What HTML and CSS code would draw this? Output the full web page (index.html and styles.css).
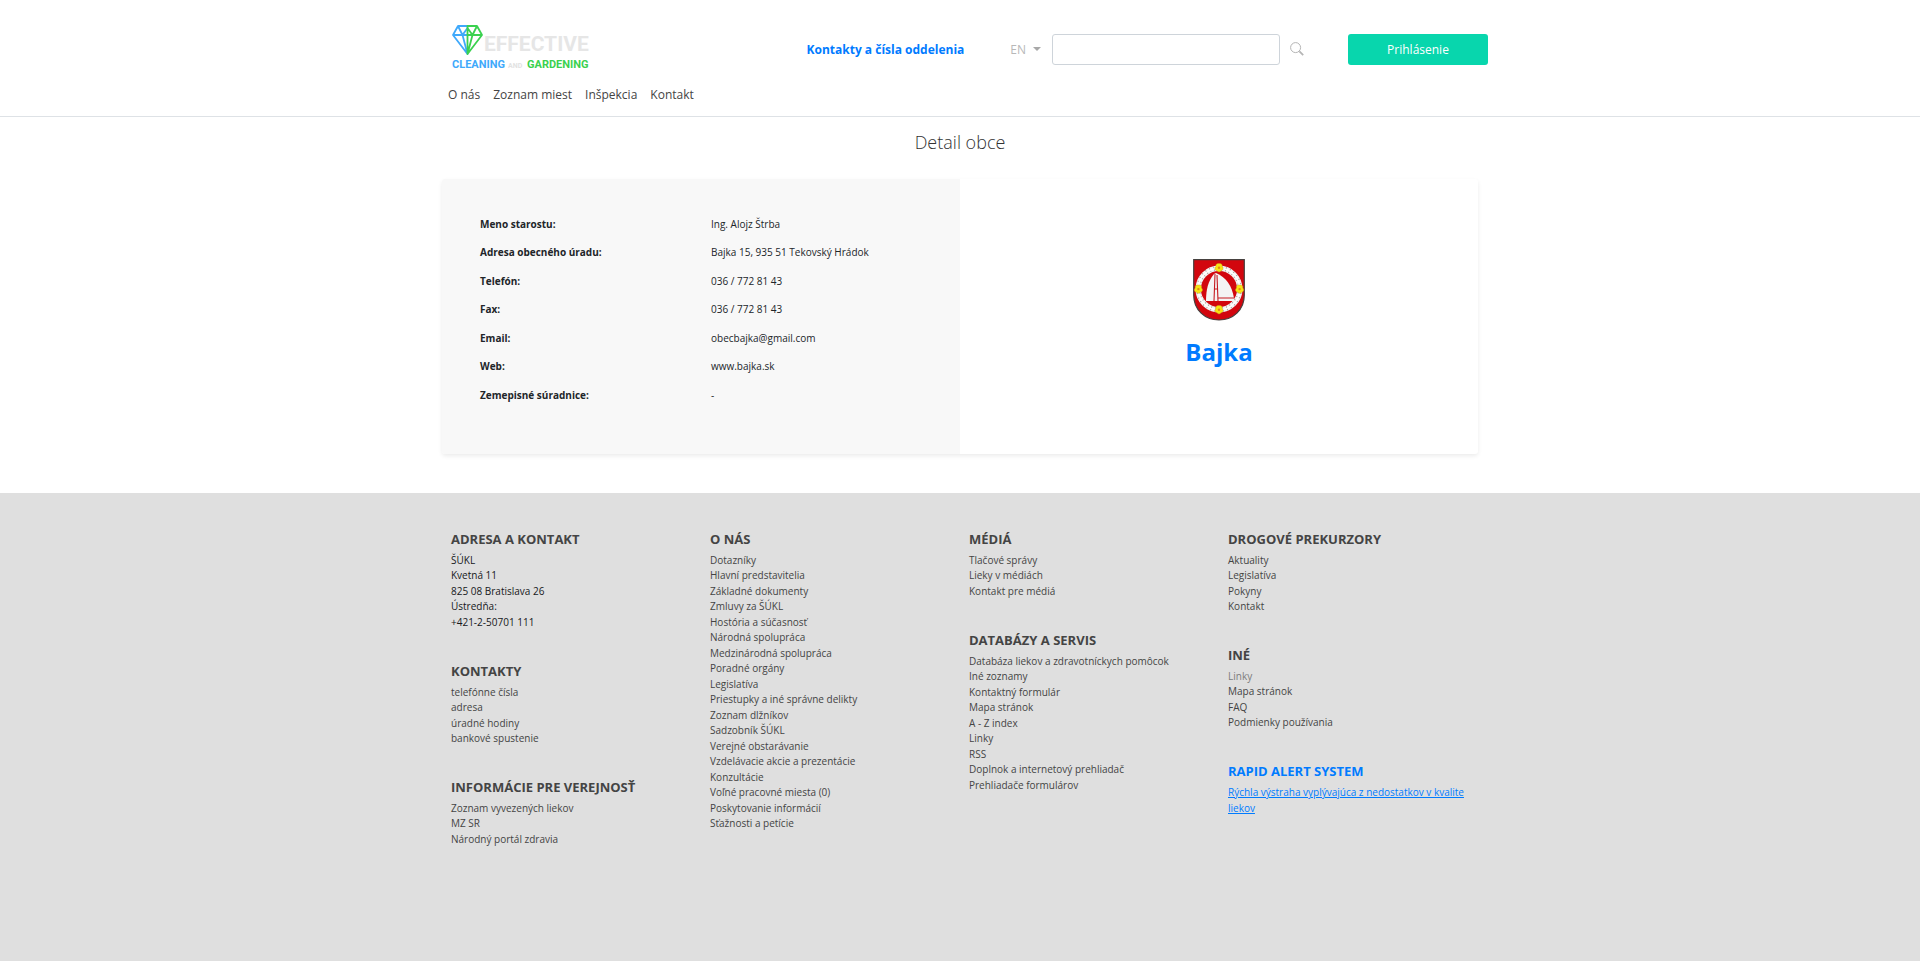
FILE: index.html
```html
<!DOCTYPE html>
<html lang="sk">
<head>
<meta charset="utf-8">
<meta name="viewport" content="width=device-width, initial-scale=1">
<title>Detail obce</title>
<link rel="stylesheet" href="styles.css">
</head>
<body>
<header class="header">
  <div class="header-inner">
    <div class="topbar">
      <a class="logo" href="#" aria-label="Effective Cleaning and Gardening">
        <svg width="146" height="50" viewBox="0 0 146 50">
          <g transform="translate(3 0)" fill="none" stroke-width="1.8" stroke-linejoin="round" stroke-linecap="round">
            <path stroke="#3fa9fb" d="M16.5 2H7L2 11L16.5 30L11.5 11H2M7 2L11.5 11L16.5 4M11.5 11H16.5"/>
            <path stroke="#3bd14f" d="M16.500 2H26L31 11L16.500 30L21.500 11H31M26 2L21.500 11L16.500 4M21.500 11H16.500M16.500 2V29"/>
          </g>
          <text class="logo-big" x="36" y="27">EFFECTIVE</text>
          <text class="logo-small logo-blue" x="4" y="44">CLEANING</text>
          <text class="logo-tiny" x="60" y="44">AND</text>
          <text class="logo-small logo-green" x="79" y="44">GARDENING</text>
        </svg>
      </a>
      <a class="contacts" href="#">Kontakty a čísla oddelenia</a>
      <button class="lang" type="button">EN<span class="caret"></span></button>
      <form class="search" role="search">
        <input class="search-input" type="text" aria-label="Hľadať">
        <button class="search-btn" type="button" aria-label="Hľadať">
          <svg width="14" height="14" viewBox="0 0 14 14" fill="none" stroke="#b5b5b5"><circle cx="5.6" cy="5.6" r="5"/><path stroke-width="1.8" d="M9.4 9.4L13.2 13.2"/></svg>
        </button>
      </form>
      <button class="login" type="button">Prihlásenie</button>
    </div>
    <nav class="nav">
      <a href="#">O nás</a>
      <a href="#">Zoznam miest</a>
      <a href="#">Inšpekcia</a>
      <a href="#">Kontakt</a>
    </nav>
  </div>
</header>
<main class="main">
  <h1 class="title">Detail obce</h1>
  <section class="card">
    <dl class="details">
      <div class="row"><dt>Meno starostu:</dt><dd>Ing. Alojz Štrba</dd></div>
      <div class="row"><dt>Adresa obecného úradu:</dt><dd>Bajka 15, 935 51 Tekovský Hrádok</dd></div>
      <div class="row"><dt>Telefón:</dt><dd>036 / 772 81 43</dd></div>
      <div class="row"><dt>Fax:</dt><dd>036 / 772 81 43</dd></div>
      <div class="row"><dt>Email:</dt><dd>obecbajka@gmail.com</dd></div>
      <div class="row"><dt>Web:</dt><dd>www.bajka.sk</dd></div>
      <div class="row"><dt>Zemepisné súradnice:</dt><dd>-</dd></div>
    </dl>
    <div class="town">
      <svg width="52" height="62" viewBox="0 0 52 62" role="img" aria-label="Erb obce Bajka">
        <path d="M.7.7H51.3V36C51.3 51 40 61 26 61S.7 51 .7 36Z" fill="#d2060e" stroke="#46413f" stroke-width="1.2"/>
        <circle cx="26" cy="30" r="20.8" fill="none" stroke="#f3f3f3" stroke-width="5.4"/>
        <circle cx="26" cy="30" r="20.8" fill="none" stroke="#a08c8a" stroke-width="4.6" stroke-dasharray=".7 3.3"/>
        <circle cx="26" cy="30" r="20.8" fill="none" stroke="#fff" stroke-width="1.6"/>
        <path d="M13 42C13 31 15 22 21 15L23 14C33 18 39 27 41 39V42Z" fill="#f4f4f4"/>
        <path d="M22 15L21 42M24 16L25 42M21 30H25M25 39H41" stroke="#c61a20" stroke-width="1.1" fill="none"/>
        <g fill="#f7e414" stroke="#c49a13" stroke-width=".4">
          <path id="flower" d="M26 4.600C28.400 4 29.800 6 29 7.500C30.800 8.500 30.300 11.600 28 11.600C27.700 13.400 24.500 13.400 24 11.600C21.600 11.600 21.300 8.600 23 7.500C22.200 6 23.800 4 26 4.600Z"/>
          <use href="#flower" y="42"/><use href="#flower" x="-20.6" y="21.4"/><use href="#flower" x="20.6" y="21.4"/>
        </g>
        <g fill="#e58a12"><circle cx="26" cy="8.7" r="1.2"/><circle cx="26" cy="50.7" r="1.2"/><circle cx="5.4" cy="30.1" r="1.2"/><circle cx="46.6" cy="30.1" r="1.2"/></g>
      </svg>
      <h2 class="town-name">Bajka</h2>
    </div>
  </section>
</main>
<footer class="footer">
  <div class="footer-grid">
    <div class="col">
      <section><h3>ADRESA A KONTAKT</h3>
        <ul class="address"><li>ŠÚKL</li><li>Kvetná 11</li><li>825 08 Bratislava 26</li><li>Ústredňa:</li><li>+421-2-50701 111</li></ul></section>
      <section><h3>KONTAKTY</h3>
        <ul><li><a href="#">telefónne čísla</a></li><li><a href="#">adresa</a></li><li><a href="#">úradné hodiny</a></li><li><a href="#">bankové spustenie</a></li></ul></section>
      <section><h3>INFORMÁCIE PRE VEREJNOSŤ</h3>
        <ul><li><a href="#">Zoznam vyvezených liekov</a></li><li><a href="#">MZ SR</a></li><li><a href="#">Národný portál zdravia</a></li></ul></section>
    </div>
    <div class="col">
      <section><h3>O NÁS</h3>
        <ul>
          <li><a href="#">Dotazníky</a></li><li><a href="#">Hlavní predstavitelia</a></li><li><a href="#">Základné dokumenty</a></li>
          <li><a href="#">Zmluvy za ŠÚKL</a></li><li><a href="#">Hostória a súčasnosť</a></li><li><a href="#">Národná spolupráca</a></li>
          <li><a href="#">Medzinárodná spolupráca</a></li><li><a href="#">Poradné orgány</a></li><li><a href="#">Legislatíva</a></li>
          <li><a href="#">Priestupky a iné správne delikty</a></li><li><a href="#">Zoznam dlžníkov</a></li><li><a href="#">Sadzobník ŠÚKL</a></li>
          <li><a href="#">Verejné obstarávanie</a></li><li><a href="#">Vzdelávacie akcie a prezentácie</a></li><li><a href="#">Konzultácie</a></li>
          <li><a href="#">Voľné pracovné miesta (0)</a></li><li><a href="#">Poskytovanie informácií</a></li><li><a href="#">Sťažnosti a petície</a></li>
        </ul></section>
    </div>
    <div class="col">
      <section><h3>MÉDIÁ</h3>
        <ul><li><a href="#">Tlačové správy</a></li><li><a href="#">Lieky v médiách</a></li><li><a href="#">Kontakt pre médiá</a></li></ul></section>
      <section><h3>DATABÁZY A SERVIS</h3>
        <ul>
          <li><a href="#">Databáza liekov a zdravotníckych pomôcok</a></li><li><a href="#">Iné zoznamy</a></li><li><a href="#">Kontaktný formulár</a></li>
          <li><a href="#">Mapa stránok</a></li><li><a href="#">A - Z index</a></li><li><a href="#">Linky</a></li><li><a href="#">RSS</a></li>
          <li><a href="#">Doplnok a internetový prehliadač</a></li><li><a href="#">Prehliadače formulárov</a></li>
        </ul></section>
    </div>
    <div class="col">
      <section><h3>DROGOVÉ PREKURZORY</h3>
        <ul><li><a href="#">Aktuality</a></li><li><a href="#">Legislatíva</a></li><li><a href="#">Pokyny</a></li><li><a href="#">Kontakt</a></li></ul></section>
      <section><h3>INÉ</h3>
        <ul><li><a class="muted" href="#">Linky</a></li><li><a href="#">Mapa stránok</a></li><li><a href="#">FAQ</a></li><li><a href="#">Podmienky používania</a></li></ul></section>
      <section class="alert"><h3>RAPID ALERT SYSTEM</h3>
        <ul><li><a href="#">Rýchla výstraha vyplývajúca z nedostatkov v kvalite liekov</a></li></ul></section>
    </div>
  </div>
</footer>
</body>
</html>
```
FILE: styles.css
```css
* { box-sizing: border-box; }
body {
  margin: 0;
  min-height: 100vh;
  display: flex;
  flex-direction: column;
  background: #fff;
  color: #212529;
  font-family: "Open Sans", "Noto Sans", sans-serif;
  font-size: 10px;
}
h1, h2, h3, ul, dl, dd { margin: 0; padding: 0; }
a { color: inherit; text-decoration: none; }
button { font: inherit; border: 0; background: none; padding: 0; cursor: pointer; }

.header { border-bottom: 1px solid #dee2e6; }
.header-inner { max-width: 1056px; margin: 0 auto; padding: 24px 0 11px 16px; }
.topbar { display: flex; align-items: center; height: 50px; }
.logo { height: 50px; margin-right: auto; }
.logo svg { display: block; }
.logo text { font-family: Roboto, sans-serif; font-weight: 700; }
.logo-big { font-size: 21px; fill: #e6e6e6; }
.logo-small { font-size: 11px; }
.logo-tiny { font-size: 7px; fill: #e2e2e2; }
.logo-blue { fill: #3fa9fb; }
.logo-green { fill: #3bd14f; }
.contacts { color: #007bff; font-size: 12px; font-weight: 700; margin-right: 46px; }
.lang { display: flex; align-items: center; gap: 7px; margin-right: 11px; color: #b8b8b8; font-size: 12px; }
.caret { border: 4px solid transparent; border-top-color: #a8a8a8; border-bottom: 0; }
.search { display: flex; align-items: center; gap: 10px; margin-right: 44px; }
.search-input { width: 228px; height: 31px; border: 1px solid #ced4da; border-radius: 3px; background: #fff; font: inherit; font-size: 12px; padding: 0 10px; }
.search-btn svg { display: block; }
.login { width: 140px; height: 31px; border-radius: 3px; background: #08d6ad; color: #fff; font-size: 12px; }
.nav { display: flex; gap: 13px; font-size: 12px; line-height: 20px; padding-top: 11px; color: #444; }

.main { width: 100%; max-width: 1036px; margin: 0 auto; padding-bottom: 39px; }
.title { text-align: center; font-size: 18px; font-weight: 300; line-height: 24px; padding: 13px 0 25px; color: #333; }
.card { display: grid; grid-template-columns: 1fr 1fr; border-radius: 3px; overflow: hidden; box-shadow: 0 2px 4px rgba(0, 0, 0, .08); }
.details { background: #f8f8f8; padding: 31px 18px 45px 38px; }
.row { display: grid; grid-template-columns: 1fr 1fr; line-height: 28px; }
.row:nth-child(even) { line-height: 29px; }
.row dt { font-weight: 700; }
.town { display: flex; flex-direction: column; align-items: center; justify-content: center; gap: 14px; padding-bottom: 6px; }
.town-name { color: #007bff; font-size: 24px; line-height: 34px; font-weight: 700; }

.footer { flex: 1; background: #dfdfdf; padding: 37px 0; }
.footer-grid { display: grid; grid-template-columns: repeat(4, 1fr); max-width: 1036px; margin: 0 auto; }
.col { display: flex; flex-direction: column; gap: 32px; padding: 0 8px 0 9px; color: #444; }
.col h3 { font-size: 13px; font-weight: 700; line-height: 18px; margin-bottom: 4px; }
.col ul { list-style: none; }
.col li { line-height: 16px; }
.col li:nth-child(even) { line-height: 15px; }
.col .address { color: #16181b; }
.col .muted { color: #7c7c7c; }
.alert { color: #007bff; }
.alert a { text-decoration: underline; }
```
